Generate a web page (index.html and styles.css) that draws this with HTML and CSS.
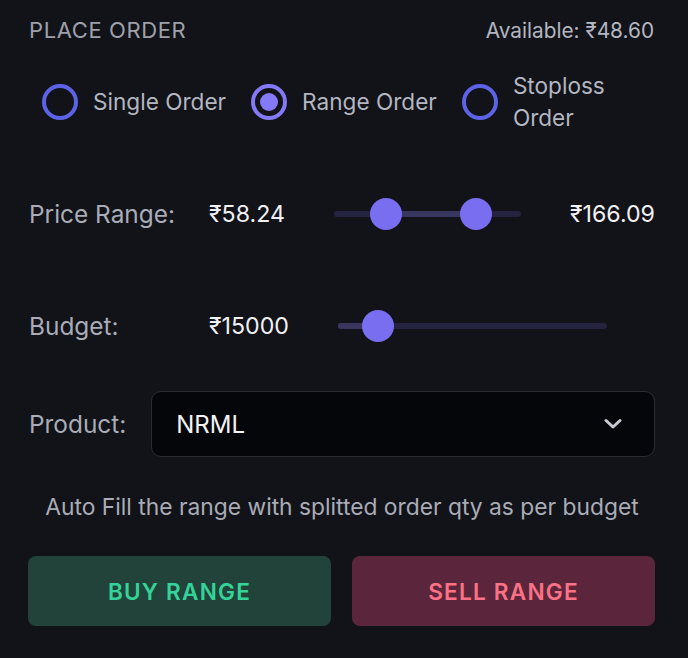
FILE: index.html
```html
<!DOCTYPE html>
<html lang="en">
<head>
<meta charset="utf-8">
<title>Place Order</title>
<link rel="stylesheet" href="styles.css">
</head>
<body>
<div class="panel">
  <div class="header">
    <span class="title">PLACE ORDER</span>
    <span class="available">Available: ₹48.60</span>
  </div>

  <div class="radios">
    <label class="radio">
      <span class="dot"></span>
      <span class="radio-text">Single Order</span>
    </label>
    <label class="radio">
      <span class="dot checked"></span>
      <span class="radio-text">Range Order</span>
    </label>
    <label class="radio last">
      <span class="dot"></span>
      <span class="radio-text">Stoploss Order</span>
    </label>
  </div>

  <div class="row price-row">
    <span class="label">Price Range:</span>
    <span class="value">₹58.24</span>
    <div class="slider price-slider">
      <div class="track"></div>
      <div class="fill" style="left:27.7%;width:48.3%"></div>
      <div class="thumb" style="left:27.7%"></div>
      <div class="thumb" style="left:76%"></div>
    </div>
    <span class="value right">₹166.09</span>
  </div>

  <div class="row budget-row">
    <span class="label">Budget:</span>
    <span class="value">₹15000</span>
    <div class="slider budget-slider">
      <div class="track"></div>
      <div class="fill" style="left:0;width:14.8%"></div>
      <div class="thumb" style="left:14.8%"></div>
    </div>
  </div>

  <div class="row product-row">
    <span class="label">Product:</span>
    <div class="select">
      <span class="select-value">NRML</span>
      <svg class="chevron" width="18" height="12" viewBox="0 0 18 12" aria-hidden="true">
        <path d="M2 2.5 L9 9 L16 2.5" fill="none" stroke="#c9cad3" stroke-width="3" stroke-linecap="round" stroke-linejoin="round"/>
      </svg>
    </div>
  </div>

  <p class="hint">Auto Fill the range with splitted order qty as per budget</p>

  <div class="buttons">
    <button class="btn buy">BUY RANGE</button>
    <button class="btn sell">SELL RANGE</button>
  </div>
</div>
</body>
</html>
```

FILE: styles.css
```css
html, body {
  margin: 0;
  padding: 0;
  background: #111318;
}

body {
  font-family: Inter, "Noto Sans", "DejaVu Sans", sans-serif;
  color: #a9acb7;
}

.panel {
  width: 688px;
  height: 658px;
  box-sizing: border-box;
  padding: 15px 33px 0 29px;
}

.header {
  display: flex;
  justify-content: space-between;
  align-items: center;
  height: 30px;
}

.title {
  font-size: 22px;
  letter-spacing: 0.6px;
  color: #9ea1ac;
}

.available {
  font-size: 20.8px;
  color: #b4b6c0;
  margin-right: 1px;
}

.radios {
  display: flex;
  align-items: center;
  gap: 25px;
  margin-top: 25px;
  height: 64px;
  padding-left: 13px;
}

.radio {
  display: flex;
  align-items: center;
  gap: 15px;
  flex: none;
}

.radio.last {
  flex: 1 1 auto;
  min-width: 0;
}

.radio.last .radio-text {
  width: 120px;
}

.dot {
  width: 36px;
  height: 36px;
  box-sizing: border-box;
  border-radius: 50%;
  border: 4px solid #5d63e6;
  flex: none;
  display: flex;
  align-items: center;
  justify-content: center;
}

.dot.checked {
  border-color: #8479f6;
}

.dot.checked::after {
  content: "";
  width: 18px;
  height: 18px;
  border-radius: 50%;
  background: #8479f6;
}

.radio-text {
  font-size: 22.6px;
  line-height: 32px;
  color: #b4b6c1;
}

.row {
  display: flex;
  align-items: center;
}

.label {
  font-size: 24.4px;
  color: #a9acb7;
}

.price-row,
.budget-row {
  height: 40px;
}

.price-row {
  margin-top: 60px;
}

.budget-row {
  margin-top: 72px;
}

.price-row .label,
.budget-row .label {
  width: 180px;
  flex: none;
}

.value {
  font-size: 23.2px;
  color: #f1f1f3;
  flex: none;
}

.value.right {
  margin-left: auto;
}

.slider {
  position: relative;
  height: 32px;
  flex: 1 1 auto;
}

.price-slider {
  margin: 0 49px;
}

.budget-slider {
  margin: 0 48px 0 49px;
}

.track {
  position: absolute;
  left: 0;
  right: 0;
  top: 13px;
  height: 6px;
  border-radius: 3px;
  background: #25243f;
}

.fill {
  position: absolute;
  top: 13px;
  height: 6px;
  border-radius: 3px;
  background: #38355f;
}

.thumb {
  position: absolute;
  top: 0;
  width: 32px;
  height: 32px;
  margin-left: -16px;
  border-radius: 50%;
  background: #7a6ef0;
}

.product-row {
  margin-top: 45px;
  gap: 25px;
}

.select {
  flex: 1 1 auto;
  height: 66px;
  box-sizing: border-box;
  border: 1px solid #2a2c33;
  border-radius: 10px;
  background: #050609;
  display: flex;
  align-items: center;
  justify-content: space-between;
  padding: 0 32px 0 24px;
}

.select-value {
  font-size: 24px;
  color: #f3f3f5;
}

.hint {
  margin: 35px 0 0;
  height: 30px;
  line-height: 30px;
  text-align: center;
  font-size: 22.8px;
  color: #a9acb6;
}

.buttons {
  display: grid;
  grid-template-columns: 1fr 1fr;
  gap: 21px;
  margin-top: 34px;
  margin-left: -1px;
}

.btn {
  height: 70px;
  border: none;
  border-radius: 8px;
  font-family: Inter, "Noto Sans", sans-serif;
  font-size: 22.6px;
  font-weight: 600;
  letter-spacing: 1.2px;
  cursor: pointer;
}

.btn.buy {
  background: #21433a;
  color: #34d399;
}

.btn.sell {
  background: #5b263b;
  color: #fb7185;
}
```
